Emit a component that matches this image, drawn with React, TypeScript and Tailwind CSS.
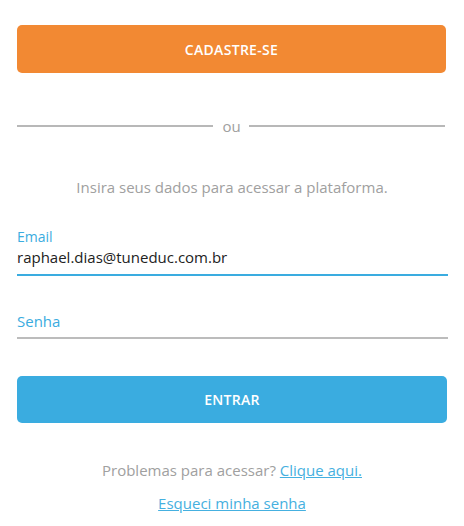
import { useState } from "react";

const App = () => {
  const [email, setEmail] = useState("raphael.dias@tuneduc.com.br");
  const [senha, setSenha] = useState("");

  return (
    <div
      className="w-[464px] min-h-[526px] bg-white px-[17px] pt-[25px]"
      style={{ fontFamily: '"Open Sans", "Noto Sans", sans-serif' }}
    >
      <button className="w-[429px] h-[48px] rounded-[5px] bg-[#f28933] text-white text-[14px] font-semibold tracking-[0.3px]">
        CADASTRE-SE
      </button>

      <div className="mt-[43px] h-[20px] flex items-center w-[428px]">
        <div className="flex-1 h-[2px] bg-[#b8b8b8]" />
        <span className="ml-[9px] mr-[8px] text-[15px] leading-[20px] text-[#a0a0a0]">
          ou
        </span>
        <div className="flex-1 h-[2px] bg-[#b8b8b8]" />
      </div>

      <p className="mt-[41px] text-center text-[15px] leading-[20px] text-[#a0a0a0]">
        Insira seus dados para acessar a plataforma.
      </p>

      <div className="mt-[31px] w-[431px] border-b-2 border-[#3aace0] pb-[6px]">
        <label className="block text-[14px] leading-[18px] text-[#3aace0]">
          Email
        </label>
        <input
          type="email"
          value={email}
          onChange={(e) => setEmail(e.target.value)}
          className="block w-full text-[15px] leading-[22px] h-[22px] text-[#222] outline-none bg-transparent"
        />
      </div>

      <div className="mt-[34px] w-[431px] border-b-2 border-[#bcbcbc] pb-[5px]">
        <input
          type="password"
          placeholder="Senha"
          value={senha}
          onChange={(e) => setSenha(e.target.value)}
          className="block w-full text-[15px] leading-[22px] h-[22px] text-[#222] placeholder:text-[#3aace0] outline-none bg-transparent"
        />
      </div>

      <button className="mt-[37px] w-[430px] h-[47px] rounded-[5px] bg-[#3aace0] text-white text-[14px] font-semibold tracking-[0.3px]">
        ENTRAR
      </button>

      <p className="mt-[37px] text-center text-[15px] leading-[20px] text-[#a0a0a0]">
        Problemas para acessar?{" "}
        <a href="#" className="text-[#45b0e0] underline underline-offset-1">
          Clique aqui.
        </a>
      </p>

      <p className="mt-[13px] text-center text-[15px] leading-[20px]">
        <a href="#" className="text-[#45b0e0] underline underline-offset-1">
          Esqueci minha senha
        </a>
      </p>
    </div>
  );
};

export default App;
